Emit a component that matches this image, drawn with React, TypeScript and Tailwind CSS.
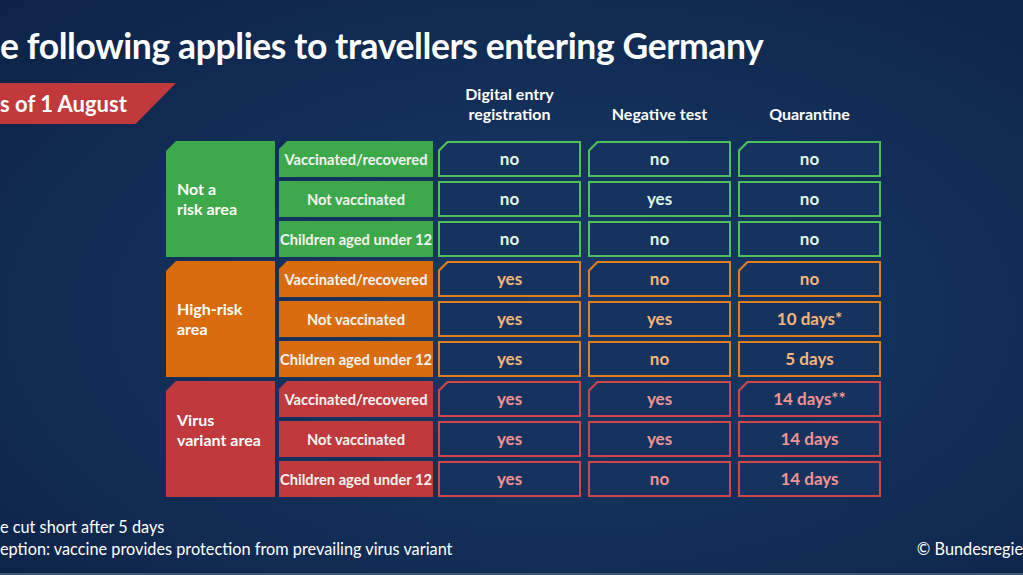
import React from "react";

type Tone = "green" | "orange" | "red";

const tones: Record<Tone, { fill: string; border: string; text: string }> = {
  green: { fill: "bg-[#3ea94b]", border: "bg-[#4dc05a]", text: "text-[#e2f6e5]" },
  orange: { fill: "bg-[#d96c0e]", border: "bg-[#e27d1c]", text: "text-[#f6b57c]" },
  red: { fill: "bg-[#c0393c]", border: "bg-[#d2464a]", text: "text-[#f29393]" },
};

const groups: { tone: Tone; area: string[]; rows: { label: string; values: string[] }[] }[] = [
  {
    tone: "green",
    area: ["Not a", "risk area"],
    rows: [
      { label: "Vaccinated/recovered", values: ["no", "no", "no"] },
      { label: "Not vaccinated", values: ["no", "yes", "no"] },
      { label: "Children aged under 12", values: ["no", "no", "no"] },
    ],
  },
  {
    tone: "orange",
    area: ["High-risk", "area"],
    rows: [
      { label: "Vaccinated/recovered", values: ["yes", "no", "no"] },
      { label: "Not vaccinated", values: ["yes", "yes", "10 days*"] },
      { label: "Children aged under 12", values: ["yes", "no", "5 days"] },
    ],
  },
  {
    tone: "red",
    area: ["Virus", "variant area"],
    rows: [
      { label: "Vaccinated/recovered", values: ["yes", "yes", "14 days**"] },
      { label: "Not vaccinated", values: ["yes", "yes", "14 days"] },
      { label: "Children aged under 12", values: ["yes", "no", "14 days"] },
    ],
  },
];

function ValueCell({ tone, first, children }: { tone: Tone; first: boolean; children: React.ReactNode }) {
  const t = tones[tone];
  return (
    <div
      className={`h-[36px] w-[143px] p-[2px] ${t.border} ${
        first ? "[clip-path:polygon(9px_0,100%_0,100%_100%,0_100%,0_9px)]" : ""
      }`}
    >
      <div
        className={`h-full flex items-center justify-center bg-[#15335e] text-[17px] font-bold ${t.text} ${
          first ? "[clip-path:polygon(8px_0,100%_0,100%_100%,0_100%,0_8px)]" : ""
        }`}
      >
        {children}
      </div>
    </div>
  );
}

export default function App() {
  return (
    <div className="relative h-[575px] w-full overflow-hidden border-b-2 border-[#3d5673] bg-[radial-gradient(ellipse_at_55%_55%,#1c3b69_0%,#13305a_45%,#0d2246_100%)] font-['Lato','Noto_Sans',sans-serif] text-white">
      {/* Title */}
      <h1 className="mt-[26px] whitespace-nowrap text-[35.5px] font-bold leading-[40px] tracking-[-0.4px]">
        e following applies to travellers entering Germany
      </h1>

      <div className="mt-[17px] flex">
        {/* Date banner */}
        <div className="flex h-[41px] w-[176px] shrink-0 items-center bg-[#c1393b] [clip-path:polygon(0_0,100%_0,77%_100%,0_100%)]">
          <span className="whitespace-nowrap text-[22px] font-bold">s of 1 August</span>
        </div>

        {/* Column headers */}
        <div className="ml-[262px] -mt-[2px] flex items-end gap-[7px] text-[16px] font-bold leading-[20px]">
          <div className="w-[143px] text-center">
            Digital entry
            <br />
            registration
          </div>
          <div className="w-[143px] text-center">Negative test</div>
          <div className="w-[143px] text-center">Quarantine</div>
        </div>
      </div>

      {/* Table */}
      <div className="ml-[166px] mt-[17px] flex flex-col gap-[4px]">
        {groups.map((g) => {
          const t = tones[g.tone];
          return (
            <div key={g.tone} className="flex">
              <div
                className={`flex h-[116px] w-[109px] flex-col justify-center pl-[11px] text-[16px] font-bold leading-[20px] ${t.fill} [clip-path:polygon(10px_0,100%_0,100%_100%,0_100%,0_10px)] ${
                  g.tone === "red" ? "pb-[18px]" : ""
                }`}
              >
                {g.area.map((a) => (
                  <span key={a}>{a}</span>
                ))}
              </div>
              <div className="ml-[4px] flex flex-col gap-[4px]">
                {g.rows.map((r, i) => (
                  <div key={r.label} className="flex">
                    <div
                      className={`flex h-[36px] w-[154px] items-center justify-center whitespace-nowrap text-[14.7px] font-bold text-[#f4f4f4] ${t.fill} ${
                        i === 0 ? "[clip-path:polygon(8px_0,100%_0,100%_100%,0_100%,0_8px)]" : ""
                      }`}
                    >
                      {r.label}
                    </div>
                    <div className="ml-[5px] flex gap-[7px]">
                      {r.values.map((v, j) => (
                        <ValueCell key={j} tone={g.tone} first={i === 0}>
                          {v}
                        </ValueCell>
                      ))}
                    </div>
                  </div>
                ))}
              </div>
            </div>
          );
        })}
      </div>

      {/* Footnotes */}
      <div className="mt-[19px] flex items-end justify-between text-[16.3px] leading-[22px]">
        <div className="whitespace-nowrap">
          <div>e cut short after 5 days</div>
          <div>eption: vaccine provides protection from prevailing virus variant</div>
        </div>
        <div className="whitespace-nowrap">© Bundesregie</div>
      </div>
    </div>
  );
}
